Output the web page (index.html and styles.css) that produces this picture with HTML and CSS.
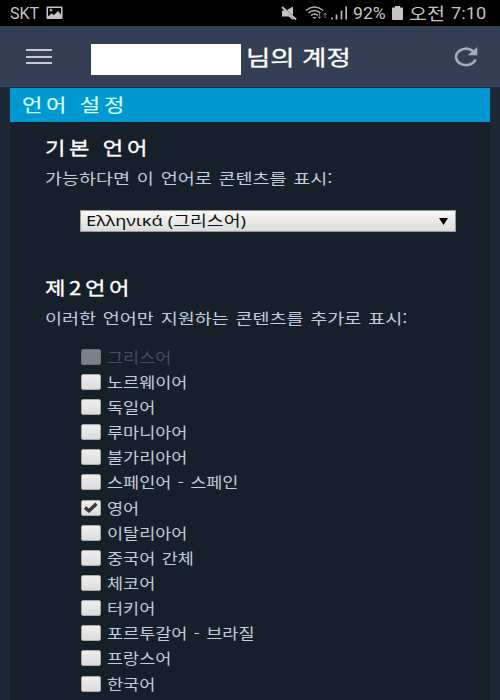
FILE: index.html
```html
<!DOCTYPE html>
<html lang="ko">
<head>
<meta charset="utf-8">
<title>언어 설정</title>
<link rel="stylesheet" href="styles.css">
</head>
<body>
<div class="status">
  <span class="carrier">SKT</span>
  <svg class="photo" width="17" height="14" viewBox="0 0 17 14"><path fill="#c4c4c4" fill-rule="evenodd" d="M1.5 0.500h14a1 1 0 0 1 1 1v10.500a1 1 0 0 1-1 1h-14a1 1 0 0 1-1-1v-10.500a1 1 0 0 1 1-1zM2 2v8.500l3.500-3 2.500 1.500 4-4 3 3.500v-6.500z"/><circle cx="5" cy="4.300" r="1.200" fill="#c4c4c4"/></svg>
  <svg class="mute" width="16" height="15" viewBox="0 0 16 15"><path fill="#c4c4c4" d="M1 4.500h3.200l8 8V14L7.500 10.500H1zM6 4l6-3.500v8.800z"/><path stroke="#c4c4c4" stroke-width="2" d="M1 1l14 12.500"/></svg>
  <svg class="wifi" width="23" height="14" viewBox="0 0 23 14"><g fill="none" stroke="#b4b4b4" stroke-width="1.500"><path d="M.8 4.500Q9.500-2.500 18.200 4.500M3.500 7Q9.500 2 15.500 7M6 9.500Q9.500 6.500 13 9.500"/></g><path fill="#b4b4b4" d="M7.500 11h4l-2 2z"/><path stroke="#777" fill="none" d="M14.500 7v5M12.800 10.500l1.700 2 1.700-2M20 12V7.500M18.300 9l1.700-2 1.700 2"/></svg>
  <svg class="signal" width="17" height="14" viewBox="0 0 17 14"><path stroke="#b8b8b8" stroke-width="1.700" d="M1 11.500V13.500M5.500 8.500v5M10.500 4.500v9M15.200 .5v13"/></svg>
  <span class="percent">92%</span>
  <svg class="battery" width="11" height="14" viewBox="0 0 11 14"><path fill="#c4c4c4" d="M3 0h5v1.500h2q1 0 1 1V13q0 1-1 1H1q-1 0-1-1V2.500q0-1 1-1h2z"/></svg>
  <span class="ampm">오전</span>
  <span class="clock">7:10</span>
</div>
<header class="topbar">
  <div class="burger"><i></i><i></i><i></i></div>
  <div class="name"></div>
  <div class="title"><h1>님의 계정</h1></div>
  <svg class="reload" width="24" height="20" viewBox="0 0 24 20"><path fill="none" stroke="#a5acb8" stroke-width="2.600" d="M21.500 12.500A10 8.200 0 1 1 19 4"/><path fill="#a5acb8" d="M23.300 0v8.200h-9.800z"/></svg>
</header>
<main class="panel">
  <h2 class="bar"><span>언어 설정</span></h2>
  <section class="primary">
    <h3>기본 언어</h3>
    <p>가능하다면 이 언어로 콘텐츠를 표시:</p>
    <div class="select"><span>Ελληνικά (그리스어)</span><svg width="9" height="7" viewBox="0 0 9 7"><path d="M0 0h9L4.500 7z"/></svg></div>
  </section>
  <section class="secondary">
    <h3>제2언어</h3>
    <p>이러한 언어만 지원하는 콘텐츠를 추가로 표시:</p>
    <ul>
      <li class="off"><b></b><span>그리스어</span></li>
      <li><b></b><span>노르웨이어</span></li>
      <li><b></b><span>독일어</span></li>
      <li><b></b><span>루마니아어</span></li>
      <li><b></b><span>불가리아어</span></li>
      <li><b></b><span>스페인어 - 스페인</span></li>
      <li><b><svg width="14" height="11" viewBox="0 0 14 11"><path fill="none" stroke="#3a3a3a" stroke-width="3.400" d="M1 5.500l4 3.300 7.500-7"/></svg></b><span>영어</span></li>
      <li><b></b><span>이탈리아어</span></li>
      <li><b></b><span>중국어 간체</span></li>
      <li><b></b><span>체코어</span></li>
      <li><b></b><span>터키어</span></li>
      <li><b></b><span>포르투갈어 - 브라질</span></li>
      <li><b></b><span>프랑스어</span></li>
      <li><b></b><span>한국어</span></li>
    </ul>
  </section>
</main>
</body>
</html>
```
FILE: styles.css
```css
* { box-sizing: border-box; margin: 0; padding: 0; }
body {
  width: 500px; height: 700px; overflow: hidden;
  background: #1b2838;
  font-family: "Noto Sans CJK KR", sans-serif;
  white-space: nowrap;
}
.status {
  height: 26px; padding-left: 10px; background: #000; color: #c4c4c4;
  display: flex; align-items: center;
  font: 16px/26px Roboto, "Noto Sans CJK KR", sans-serif;
}
.status > * { flex: none; }
.carrier { width: 36px; padding-top: 2px; }
.mute { margin-left: 218px; }
.wifi { margin-left: 8px; }
.signal { margin-left: 3px; }
.percent { width: 38px; margin-left: 5px; padding-top: 2px; transform: scaleX(1.1); transform-origin: left; }
.battery { margin-left: 1px; }
.ampm { width: 42px; margin-left: 6px; padding-top: 1px; font-size: 17px; transform: scaleX(1.15); transform-origin: left; }
.clock { padding-top: 2px; transform: scaleX(1.14); transform-origin: left; }

.topbar { height: 61px; background: #323f55; display: flex; align-items: center; padding-left: 26px; }
.topbar > * { flex: none; }
.burger { width: 26px; height: 15px; display: flex; flex-direction: column; justify-content: space-between; }
.burger i { height: 2px; background: #c3cad6; }
.name { width: 150px; height: 31px; margin-left: 39px; background: #fff; margin-top: 5px; }
.title { width: 208px; margin-left: 5px; }
h1 { color: #fff; font-size: 21px; font-weight: 400; line-height: 30px; margin-top: -2px; }
h1, h3 { -webkit-text-stroke: 0.3px #fff; }
h1, h3, p { width: max-content; }
h1, h3, p, .bar span, .select span, li span { transform-origin: left; }
h1 { transform: scaleX(1.26); }

.panel { width: 480px; height: 612px; margin: 1px 10px 0; background: #16202b; }
.bar {
  height: 34px; padding-left: 12px; background: #0098d1; color: #d5ffff;
  font-size: 18.5px; font-weight: 400; line-height: 32px;
  -webkit-text-stroke: 0.2px #d5ffff;
}
.bar span { display: inline-block; letter-spacing: 3px; transform: scaleX(1.2); }
.primary { height: 151px; padding: 11px 35px 0; }
.secondary { padding: 0 35px; }
h3 { color: #fff; font-size: 18.5px; line-height: 28px; font-weight: 400; letter-spacing: 3px; transform: scaleX(1.2); }
p { color: #c2cedb; font-size: 15px; line-height: 24px; margin-top: 5px; word-spacing: 1.300px; transform: scaleX(1.233); }
.select {
  width: 376px; height: 22px; margin: 20px 0 0 35px; padding: 0 7px 0 5px;
  display: flex; align-items: center; justify-content: space-between;
  border: 1px solid #999; background: linear-gradient(#f7f7f7, #dcdcdc); color: #111;
}
.select span { font-size: 15px; line-height: 20px; font-family: "Noto Sans", "Noto Sans CJK KR", sans-serif; transform: translateY(-1px) scaleX(1.22); }
ul { list-style: none; margin: 14px 0 0 36px; }
li { height: 25.170px; display: flex; align-items: center; }
li b {
  width: 20px; height: 16px; border-radius: 2px; display: flex; align-items: center; justify-content: center;
  background: linear-gradient(#eee, #dcdcdc); border: 1px solid #aaa;
}
li span { margin-left: 6px; color: #c2cedb; font-size: 15px; line-height: 24px; word-spacing: 1.300px; transform: scaleX(1.165); }
.off b { background: #7d8086; border-color: #6d7177; }
.off span { color: #46515c; }
```
